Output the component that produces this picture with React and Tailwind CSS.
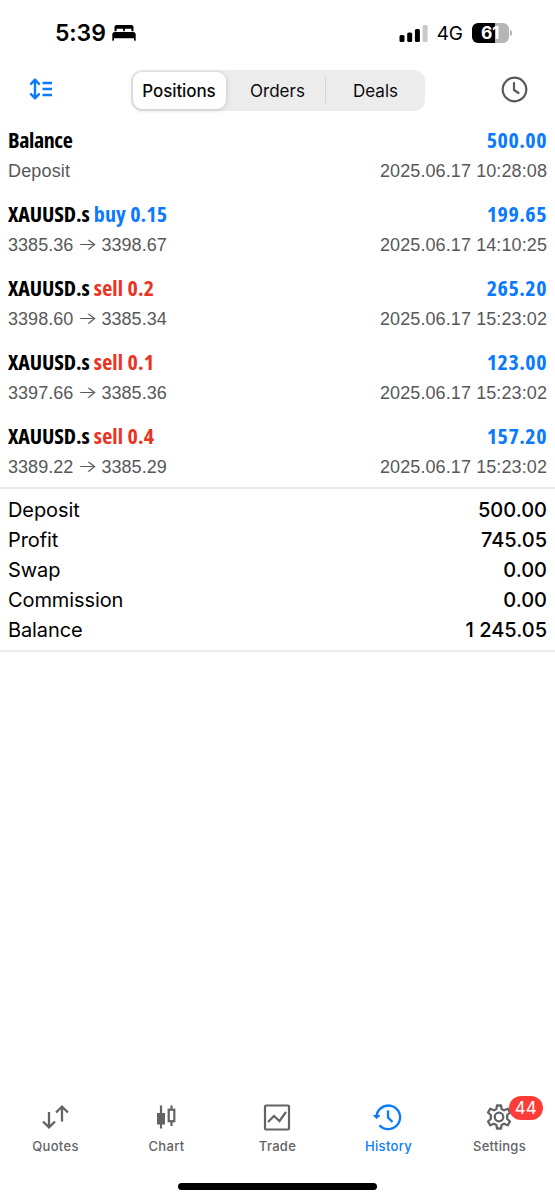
import { useState } from 'react';

const TABS = ['Positions', 'Orders', 'Deals'];

const DEALS = [
  { symbol: 'Balance', note: 'Deposit', time: '2025.06.17 10:28:08', profit: '500.00' },
  { symbol: 'XAUUSD.s', side: 'buy', volume: '0.15', open: '3385.36', close: '3398.67', time: '2025.06.17 14:10:25', profit: '199.65' },
  { symbol: 'XAUUSD.s', side: 'sell', volume: '0.2', open: '3398.60', close: '3385.34', time: '2025.06.17 15:23:02', profit: '265.20' },
  { symbol: 'XAUUSD.s', side: 'sell', volume: '0.1', open: '3397.66', close: '3385.36', time: '2025.06.17 15:23:02', profit: '123.00' },
  { symbol: 'XAUUSD.s', side: 'sell', volume: '0.4', open: '3389.22', close: '3385.29', time: '2025.06.17 15:23:02', profit: '157.20' },
];

const TOTALS = [
  ['Deposit', '500.00'],
  ['Profit', '745.05'],
  ['Swap', '0.00'],
  ['Commission', '0.00'],
  ['Balance', '1 245.05'],
];

function StatusBar() {
  return (
    <div className="flex h-[66px] items-center justify-between pr-[43px] pl-[55px]">
      <div className="flex items-center gap-[6px]">
        <span className="pt-px text-[23px] font-semibold tracking-[-0.1px]">5:39</span>
        <svg width="24" height="18" viewBox="0 0 24 18" fill="#000">
          <path d="M2.5 7.2V3.2C2.5 1.700 3.400 1 4.800 1H19.200C20.600 1 21.500 1.700 21.500 3.200V7.200H19.500V6C19.500 5.200 19 4.800 18.300 4.800H14C13.200 4.800 12.800 5.200 12.800 6V7.200H11.200V6C11.200 5.200 10.800 4.800 10 4.800H5.700C5 4.800 4.500 5.200 4.500 6V7.200Z" />
          <path d="M0.300 10.500C0.300 9 1.200 8 2.700 8H21.300C22.800 8 23.700 9 23.700 10.500V16.200C23.700 17 22 17 22 16.200V14.300H2V16.200C2 17 0.300 17 0.300 16.200Z" />
        </svg>
      </div>
      <div className="flex items-center">
        <svg width="29" height="19" viewBox="0 0 29 19">
          <rect x="0.500" y="11" width="5" height="7" rx="1.500" />
          <rect x="8.200" y="8.500" width="5" height="9.500" rx="1.500" />
          <rect x="15.900" y="5" width="5" height="13" rx="1.500" />
          <rect x="23.600" y="1" width="5" height="17" rx="1.500" fill="#c9c9c9" />
        </svg>
        <span className="ml-[9px] pt-[2px] text-[19px] tracking-[-0.4px]">4G</span>
        <div className="ml-[9px] flex h-[20px] w-[37px] items-center justify-center rounded-[6px] bg-linear-to-r from-black from-[62%] to-[#b5b5b5] to-[62%] text-[17.500px] leading-none font-bold tracking-[-0.5px] text-white">
          61
        </div>
        <span className="ml-[1.500px] h-[6px] w-[2px] rounded-r-full bg-[#b5b5b5]" />
      </div>
    </div>
  );
}

function Toolbar({ tab, onTab }) {
  return (
    <div className="flex h-[48px] items-center justify-between pr-[27px] pl-[29px]">
      <svg width="24" height="22" viewBox="0 0 24 22" fill="none" stroke="#0a7aff" strokeWidth="2.400" className="mt-[-2px]">
        <path d="M6 2V20M2 5.800L6 1.700L10 5.800M2 16.200L6 20.300L10 16.200" strokeLinecap="round" strokeLinejoin="round" />
        <path d="M13.500 5H23M13.500 11H23M13.500 17H23" />
      </svg>
      <div className="ml-[1px] flex h-[41px] w-[294px] items-center rounded-[11px] bg-[#ececed] p-[2px] text-[17px] text-[#0a0a0a]">
        {TABS.map((t) => (
          <button
            key={t}
            onClick={() => onTab(t)}
            className={
              t === tab
                ? 'mr-[4px] h-[37px] w-[93px] rounded-[9px] bg-white pt-[4px] font-medium tracking-[-0.1px] shadow-[0_1px_5px_rgba(0,0,0,0.18)]'
                : 'h-[26px] flex-1 border-r border-[#d6d6d8] pt-[2px] pl-px last:border-r-0 last:pl-[3px]'
            }
          >
            {t}
          </button>
        ))}
      </div>
      <svg width="27" height="27" viewBox="0 0 27 27" fill="none" stroke="#58585a" strokeWidth="2.200" className="mt-[-2px]">
        <circle cx="13.500" cy="13.500" r="11.800" />
        <path d="M13 7V14L17.500 17" strokeLinecap="round" strokeLinejoin="round" />
      </svg>
    </div>
  );
}

function DealRow({ deal }) {
  return (
    <li className="h-[73.900px] px-[8px]">
      <div className="flex h-[30px] justify-between font-['Open_Sans','Noto_Sans',sans-serif] text-[22px] leading-[27px] font-bold [font-stretch:75%]">
        <span className="whitespace-pre">
          <span className={deal.side ? 'tracking-[-0.100px]' : 'tracking-[-0.400px]'}>{deal.symbol}</span>
          {deal.side ? (
            <span className={deal.side === 'buy' ? 'tracking-[0.150px] text-[#0a7aff]' : 'tracking-[0.150px] text-[#eb3323]'}>
              {' '}
              {deal.side} {deal.volume}
            </span>
          ) : null}
        </span>
        <span className="tracking-[0.500px] text-[#0a7aff]">{deal.profit}</span>
      </div>
      <div className="flex h-[30px] justify-between font-['Liberation_Sans',sans-serif] text-[18px] leading-[30px] text-[#58585a]">
        {deal.open ? (
          <span className="flex tracking-[0.050px]">
            {deal.open}
            <span className="mx-[5px] flex w-[18px] scale-y-75 justify-center font-['Inter'] text-[21px] leading-[28px] font-light">→</span>
            {deal.close}
          </span>
        ) : (
          <span className="tracking-[0.150px]">{deal.note}</span>
        )}
        <span className="tracking-[0.100px]">{deal.time}</span>
      </div>
    </li>
  );
}

function QuotesIcon() {
  return (
    <svg width="28" height="28" viewBox="0 0 28 28" fill="none" stroke="currentColor" strokeWidth="2.300">
      <path d="M8 8V23M2 17.500L8 23.300L14 17.500M21 17.500V3M15 8.500L21 2.700L27 8.500" />
    </svg>
  );
}

function ChartIcon() {
  return (
    <svg width="28" height="28" viewBox="0 0 28 28" fill="none" stroke="currentColor" strokeWidth="2.200">
      <path d="M9 1.500V24.500M19.500 1.500V5.500M19.500 17V22" />
      <path d="M5 9H13V20.500H5Z" fill="currentColor" stroke="none" />
      <rect x="16.700" y="5.700" width="5.600" height="11.500" />
    </svg>
  );
}

function TradeIcon() {
  return (
    <svg width="28" height="28" viewBox="0 0 28 28" fill="none" stroke="currentColor" strokeWidth="2.200">
      <rect x="2" y="1.500" width="24" height="24" rx="1" />
      <path d="M5 18L11 12L16.500 17L23 8" />
    </svg>
  );
}

function HistoryIcon() {
  return (
    <svg width="28" height="28" viewBox="1 0.5 28 28" fill="none" stroke="currentColor" strokeWidth="2.300" className="overflow-visible">
      <path d="M3.500 14.500A11.800 11.800 0 1 1 6.500 21.700" />
      <path d="M0.500 12L3.500 15L7 12Z" fill="currentColor" strokeWidth="1" />
      <path d="M15 7V14L19.500 18.500" />
    </svg>
  );
}

function SettingsIcon() {
  return (
    <svg width="28" height="28" viewBox="0 0 28 28" fill="none" stroke="currentColor" strokeWidth="2.300" strokeLinejoin="round">
      <path d="M12 1.500H16L16.600 5L19 6.300L22.700 4.700L25 8.500L22.200 11V15L25 17.500L22.700 21.300L19 19.700L16.600 21L16 24.500H12L11.400 21L9 19.700L5.300 21.300L3 17.500L5.800 15V11L3 8.500L5.300 4.700L9 6.300L11.400 5Z" />
      <circle cx="14" cy="13" r="4.300" />
    </svg>
  );
}

const NAV = [
  { label: 'Quotes', icon: QuotesIcon },
  { label: 'Chart', icon: ChartIcon },
  { label: 'Trade', icon: TradeIcon },
  { label: 'History', icon: HistoryIcon, active: true },
  { label: 'Settings', icon: SettingsIcon, badge: 44 },
];

export default function App() {
  const [tab, setTab] = useState('Positions');

  return (
    <div className="flex h-[1200px] w-[555px] flex-col overflow-hidden bg-white font-['Inter',sans-serif] text-black">
      <StatusBar />
      <Toolbar tab={tab} onTab={setTab} />

      <ul className="mt-[12px] h-[361px]">
        {DEALS.map((d, i) => (
          <DealRow key={i} deal={d} />
        ))}
      </ul>

      <div className="border-y-2 border-[#ebebec] px-[8px] pt-[5.500px] pb-[4.500px]">
        {TOTALS.map(([label, value]) => (
          <div key={label} className="flex h-[30.200px] items-center justify-between text-[20px]">
            <span className="tracking-[-0.100px]">{label}</span>
            <span className="font-medium">{value}</span>
          </div>
        ))}
      </div>

      <nav className="mt-auto flex h-[79px]">
        {NAV.map(({ label, icon: Icon, active, badge }) => (
          <button
            key={label}
            className={
              active
                ? 'flex flex-1 flex-col items-center text-[#0a7aff]'
                : 'flex flex-1 flex-col items-center text-[#636365]'
            }
          >
            <span className="relative mr-[1.500px]">
              <Icon />
              {badge ? (
                <span className="absolute top-[-8px] left-[24px] flex h-[24px] w-[34px] items-center justify-center rounded-full bg-[#fb3c38] pt-px text-[17px] text-white">
                  {badge}
                </span>
              ) : null}
            </span>
            <span className="mt-[5px] text-[13px] leading-[18px] font-medium tracking-[0.300px]">{label}</span>
          </button>
        ))}
      </nav>
      <div className="flex h-[17px] justify-center">
        <div className="h-[7px] w-[199px] rounded-full bg-black" />
      </div>
    </div>
  );
}
